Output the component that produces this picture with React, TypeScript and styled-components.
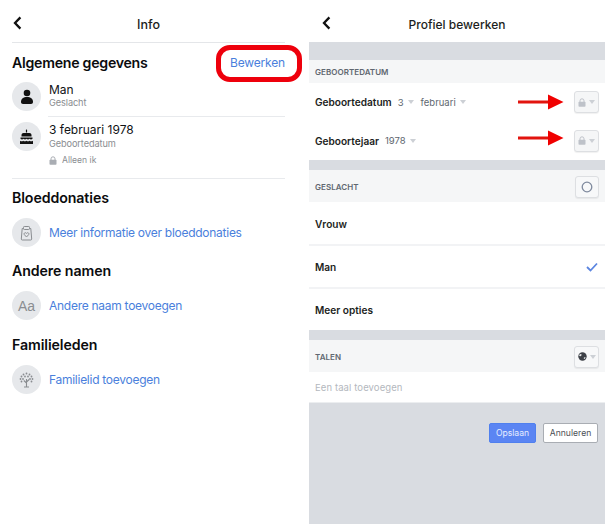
import React from "react";
import styled, { createGlobalStyle } from "styled-components";

const Global = createGlobalStyle`
  html, body { margin: 0; padding: 0; background: #fff; }
  body { font-family: Inter, "Liberation Sans", sans-serif; -webkit-font-smoothing: antialiased; }
`;

const Page = styled.div`
  display: flex;
  gap: 4px;
  width: 605px;
  height: 524px;
  overflow: hidden;
  background: #fff;
`;

const InfoPanel = styled.section`
  position: relative;
  width: 305px;
  flex: none;
  padding: 0 20px 0 12px;
  box-sizing: border-box;
`;

const InfoHeader = styled.header`
  display: flex;
  align-items: center;
  justify-content: center;
  position: relative;
  height: 43px;
  box-sizing: border-box;
  padding-top: 6px;
  border-bottom: 1px solid #e4e6e9;
  font-size: 12.5px;
  font-weight: 500;
  color: #1c1e21;
`;

const BackIcon = styled.svg<{ $left: number }>`
  position: absolute;
  left: ${(p) => p.$left}px;
  top: 16px;
  width: 9px;
  height: 14px;
`;

const SectionHead = styled.div<{ $top: number }>`
  display: flex;
  justify-content: space-between;
  align-items: center;
  margin-top: ${(p) => p.$top}px;
  height: 22px;
`;

const SectionTitle = styled.h2<{ $tracking?: number }>`
  margin: 0;
  font-size: 14.2px;
  font-weight: 600;
  letter-spacing: ${(p) => p.$tracking ?? -0.1}px;
  color: #0b0c0e;
`;

const EditLink = styled.span`
  font-size: 12px;
  letter-spacing: -0.17px;
  color: #4a7fdc;
`;

const RedBox = styled.div`
  position: absolute;
  left: 216px;
  top: 45px;
  width: 86px;
  height: 37px;
  box-sizing: border-box;
  border: 5px solid #ee000c;
  border-radius: 14px;
`;

const Row = styled.div<{ $top: number }>`
  display: flex;
  gap: 8px;
  margin-top: ${(p) => p.$top}px;
`;

const CenterRow = styled(Row)`
  align-items: center;
`;

const Circle = styled.div`
  width: 29px;
  height: 29px;
  flex: none;
  border-radius: 50%;
  background: #e6e8eb;
  display: flex;
  align-items: center;
  justify-content: center;
`;

const AaGlyph = styled.span`
  font-size: 14px;
  color: #8a8d91;
  font-family: "Liberation Sans", sans-serif;
`;

const RowBody = styled.div<{ $height: number }>`
  flex: 1;
  height: ${(p) => p.$height}px;
`;

const Value = styled.div`
  font-size: 12px;
  line-height: 15px;
  color: #111316;
`;

const Caption = styled.div<{ $gap: number }>`
  font-size: 9.2px;
  line-height: 12px;
  margin-top: ${(p) => p.$gap}px;
  color: #8a8d91;
  letter-spacing: -0.1px;
`;

const Privacy = styled.div`
  display: flex;
  align-items: center;
  gap: 5px;
  margin-top: 4px;
  font-size: 8.6px;
  line-height: 12px;
  color: #8a8d91;
`;

const InsetDivider = styled.div<{ $top: number }>`
  height: 1px;
  background: #e8eaed;
  margin: ${(p) => p.$top}px 0 0 36px;
`;

const Divider = styled.div`
  height: 1px;
  background: #e8eaed;
  margin-top: 7px;
`;

const LinkText = styled.span`
  font-size: 12px;
  letter-spacing: -0.27px;
  color: #4a7fdc;
`;

const EditPanel = styled.section`
  position: relative;
  flex: 1;
  display: flex;
  flex-direction: column;
  background: #d9dce1;
  font-family: Inter, sans-serif;
`;

const EditHeader = styled.header`
  height: 42px;
  flex: none;
  box-sizing: border-box;
  padding-top: 6px;
  background: #fff;
  display: flex;
  align-items: center;
  justify-content: center;
  font-size: 12px;
  font-weight: 500;
  color: #1c1e21;
`;

const GreyBar = styled.div<{ $h: number }>`
  height: ${(p) => p.$h}px;
  flex: none;
`;

const LabelBar = styled.div<{ $h: number }>`
  height: ${(p) => p.$h}px;
  flex: none;
  box-sizing: border-box;
  background: #f5f6f7;
  padding: 1px 6px 0 6px;
  display: flex;
  align-items: center;
  justify-content: space-between;
  font-size: 8px;
  font-weight: 600;
  letter-spacing: 0.05px;
  color: #606770;
`;

const DateBlock = styled.div`
  height: 77px;
  flex: none;
  background: #fff;
  display: grid;
  grid-template-rows: 38px 39px;
`;

const DateRow = styled.div`
  display: flex;
  align-items: center;
  padding: 0 6px;
  font-size: 9.5px;
  color: #606770;
`;

const DateLabel = styled.strong`
  font-weight: 600;
  font-size: 10.1px;
  color: #1c1e21;
  margin-right: 6px;
`;

const Caret = styled.span<{ $gap?: number; $flush?: boolean }>`
  width: 0;
  height: 0;
  margin: 0 ${(p) => p.$gap ?? 0}px 0 ${(p) => (p.$flush ? 0 : 4)}px;
  border-left: 3px solid transparent;
  border-right: 3px solid transparent;
  border-top: 4px solid #ccd0d5;
`;

const Spacer = styled.div`
  flex: 1;
`;

const SmallButton = styled.div<{ $w: number; $muted?: boolean }>`
  width: ${(p) => p.$w}px;
  height: 22px;
  box-sizing: border-box;
  border: 1px solid #dddfe2;
  border-radius: 3px;
  background: ${(p) => (p.$muted ? "#f5f6f7" : "#f7f8f9")};
  box-shadow: 0 1px 1px rgba(0, 0, 0, 0.06);
  display: flex;
  align-items: center;
  justify-content: center;
  gap: 3px;
`;

const Arrow = styled.svg<{ $top: number }>`
  position: absolute;
  left: 209px;
  top: ${(p) => p.$top}px;
  width: 46px;
  height: 16px;
`;

const OptionRow = styled.div<{ $h: number }>`
  height: ${(p) => p.$h}px;
  flex: none;
  box-sizing: border-box;
  background: #fff;
  padding: 1px 7px 0 6px;
  display: flex;
  align-items: center;
  justify-content: space-between;
  font-size: 10.1px;
  font-weight: 600;
  color: #1c1e21;
`;

const Sep = styled.div`
  height: 2px;
  flex: none;
  background: #f2f3f5;
`;

const LanguageInput = styled.div`
  height: 31px;
  flex: none;
  box-sizing: border-box;
  background: #fff;
  padding: 0 6px;
  display: flex;
  align-items: center;
  font-size: 9.5px;
  color: #b4b8be;
  letter-spacing: 0.1px;
  border-bottom: 1px solid #eceef0;
`;

const Actions = styled.div`
  display: flex;
  justify-content: flex-end;
  gap: 7px;
  padding: 20px 7px 0 0;
`;

const Btn = styled.div<{ $primary?: boolean; $w: number }>`
  width: ${(p) => p.$w}px;
  height: 20px;
  box-sizing: border-box;
  border-radius: 2px;
  display: flex;
  align-items: center;
  justify-content: center;
  font-size: 8.6px;
  background: ${(p) => (p.$primary ? "#5b85f3" : "#fff")};
  color: ${(p) => (p.$primary ? "#e8eeff" : "#4b4f56")};
  border: 1px solid ${(p) => (p.$primary ? "#5080ee" : "#a9adb3")};
`;

const Back = ({ left }: { left: number }) => (
  <BackIcon $left={left} viewBox="0 0 9 14">
    <path d="M7.400 1.400 2 7l5.400 5.600" fill="none" stroke="#111" strokeWidth="2.300" />
  </BackIcon>
);

const Lock = ({ color = "#a9adb3" }: { color?: string }) => (
  <svg width="8" height="9" viewBox="0 0 8 9">
    <path d="M2 4V2.800a2 2 0 0 1 4 0V4" fill="none" stroke={color} strokeWidth="1" />
    <rect x="0.500" y="3.800" width="7" height="5" rx="0.800" fill={color} />
  </svg>
);

const RedArrow = ({ top }: { top: number }) => (
  <Arrow $top={top} viewBox="0 0 46 16">
    <rect x="0" y="6.500" width="32" height="3" fill="#e2140e" />
    <path d="M30 0.500 45.500 8 30 15.500Z" fill="#f00000" />
  </Arrow>
);

const treeDots: Array<[number, number]> = [
  [7.5, 1.5], [4.5, 2.5], [10.5, 2.5], [2.5, 4.5], [6, 4.5], [9, 4.5], [12.5, 4.5],
  [1.5, 7], [4, 7], [11, 7], [13.5, 7], [2.5, 9.5], [12.5, 9.5],
];

export default function App() {
  return (
    <Page>
      <Global />
      <InfoPanel>
        <InfoHeader>
          <Back left={1} />
          Info
        </InfoHeader>
        <SectionHead $top={8}>
          <SectionTitle $tracking={-0.28}>Algemene gegevens</SectionTitle>
          <EditLink>Bewerken</EditLink>
        </SectionHead>
        <RedBox />
        <Row $top={9}>
          <Circle>
            <svg width="14" height="16" viewBox="0 0 14 16">
              <circle cx="7" cy="4" r="3.300" fill="#111" />
              <path d="M1 13c0-3.400 2.400-5 6-5s6 1.600 6 5c0 1.300-.8 2-2 2H3c-1.200 0-2-.7-2-2Z" fill="#111" />
            </svg>
          </Circle>
          <RowBody $height={27}>
            <Value>Man</Value>
            <Caption $gap={0}>Geslacht</Caption>
          </RowBody>
        </Row>
        <InsetDivider $top={5} />
        <Row $top={5}>
          <Circle>
            <svg width="15" height="16" viewBox="0 0 15 16">
              <rect x="6.900" y="0.500" width="1.200" height="3" rx="0.500" fill="#111" />
              <path d="M2.500 6c0-1.200 1-2 2-2h6c1 0 2 .8 2 2v1.500h-10Z" fill="#111" />
              <path d="M1.500 8.500h12v1.200c-1 1-2 1-3 0-1 1-2 1-3 0-1 1-2 1-3 0-1 1-2 1-3 0Z" fill="#111" />
              <path d="M1 11.800c1.300.8 2.300.6 3.200 0 1 .7 2.100.7 3.200 0 1 .7 2.100.7 3.200 0 1 .6 2.100.8 3.400 0V15H1Z" fill="#111" />
            </svg>
          </Circle>
          <RowBody $height={49}>
            <Value>3 februari 1978</Value>
            <Caption $gap={1}>Geboortedatum</Caption>
            <Privacy>
              <Lock />
              Alleen ik
            </Privacy>
          </RowBody>
        </Row>
        <Divider />
        <SectionHead $top={7}>
          <SectionTitle>Bloeddonaties</SectionTitle>
        </SectionHead>
        <CenterRow $top={10}>
          <Circle>
            <svg width="15" height="16" viewBox="0 0 15 16" fill="none" stroke="#8a8d91" strokeWidth="1">
              <path d="M4.500 3.500H3.200l-.9 10.500a1 1 0 0 0 1 1h8.400a1 1 0 0 0 1-1l-.9-10.500h-1.300" />
              <rect x="4.500" y="1.500" width="6" height="3" rx="0.800" />
              <path d="M7.500 12 5.300 9.600c-1-1.300 1.200-2.800 2.200-1.200 1-1.600 3.200-.1 2.200 1.200Z" />
            </svg>
          </Circle>
          <LinkText>Meer informatie over bloeddonaties</LinkText>
        </CenterRow>
        <SectionHead $top={12}>
          <SectionTitle>Andere namen</SectionTitle>
        </SectionHead>
        <CenterRow $top={10}>
          <Circle>
            <AaGlyph>Aa</AaGlyph>
          </Circle>
          <LinkText>Andere naam toevoegen</LinkText>
        </CenterRow>
        <SectionHead $top={13}>
          <SectionTitle>Familieleden</SectionTitle>
        </SectionHead>
        <CenterRow $top={10}>
          <Circle>
            <svg width="15" height="16" viewBox="0 0 15 16" fill="none" stroke="#8a8d91">
              <path d="M7.500 15V7M5 15h5M7.500 11 4.800 8.500M7.500 10l2.700-2.500" strokeWidth="1.100" />
              {treeDots.map(([cx, cy]) => (
                <circle key={`${cx}-${cy}`} cx={cx} cy={cy} r="0.900" fill="#8a8d91" stroke="none" />
              ))}
            </svg>
          </Circle>
          <LinkText>Familielid toevoegen</LinkText>
        </CenterRow>
      </InfoPanel>

      <EditPanel>
        <EditHeader>
          <Back left={13} />
          Profiel bewerken
        </EditHeader>
        <GreyBar $h={18} />
        <LabelBar $h={23}>GEBOORTEDATUM</LabelBar>
        <DateBlock>
          <DateRow>
            <DateLabel>Geboortedatum</DateLabel>3<Caret $gap={7} />
            februari
            <Caret />
            <Spacer />
            <SmallButton $w={25} $muted>
              <Lock color="#bec2c9" />
              <Caret $flush />
            </SmallButton>
          </DateRow>
          <DateRow>
            <DateLabel>Geboortejaar</DateLabel>1978
            <Caret />
            <Spacer />
            <SmallButton $w={25} $muted>
              <Lock color="#bec2c9" />
              <Caret $flush />
            </SmallButton>
          </DateRow>
        </DateBlock>
        <RedArrow top={94} />
        <RedArrow top={130} />
        <GreyBar $h={10} />
        <LabelBar $h={32}>
          GESLACHT
          <SmallButton $w={24}>
            <svg width="12" height="12" viewBox="0 0 12 12">
              <circle cx="6" cy="6" r="4.800" fill="none" stroke="#7f8a9e" strokeWidth="1.300" />
            </svg>
          </SmallButton>
        </LabelBar>
        <OptionRow $h={42}>Vrouw</OptionRow>
        <Sep />
        <OptionRow $h={41}>
          Man
          <svg width="12" height="10" viewBox="0 0 12 10">
            <path d="M1 5l3.500 3.500L11 1.500" fill="none" stroke="#5b85e0" strokeWidth="1.800" />
          </svg>
        </OptionRow>
        <Sep />
        <OptionRow $h={41}>Meer opties</OptionRow>
        <GreyBar $h={10} />
        <LabelBar $h={32}>
          TALEN
          <SmallButton $w={25}>
            <svg width="9" height="9" viewBox="0 0 9 9">
              <circle cx="4.500" cy="4.500" r="4.200" fill="#3d4147" />
              <path d="M1.500 2.500 3 2l.8 1-1.300 1.300L1.200 4ZM6 5.500l1.600-.5-.8 2-1.100-.4Z" fill="#eceef0" />
            </svg>
            <Caret $flush />
          </SmallButton>
        </LabelBar>
        <LanguageInput>Een taal toevoegen</LanguageInput>
        <Actions>
          <Btn $primary $w={47}>Opslaan</Btn>
          <Btn $w={55}>Annuleren</Btn>
        </Actions>
      </EditPanel>
    </Page>
  );
}
